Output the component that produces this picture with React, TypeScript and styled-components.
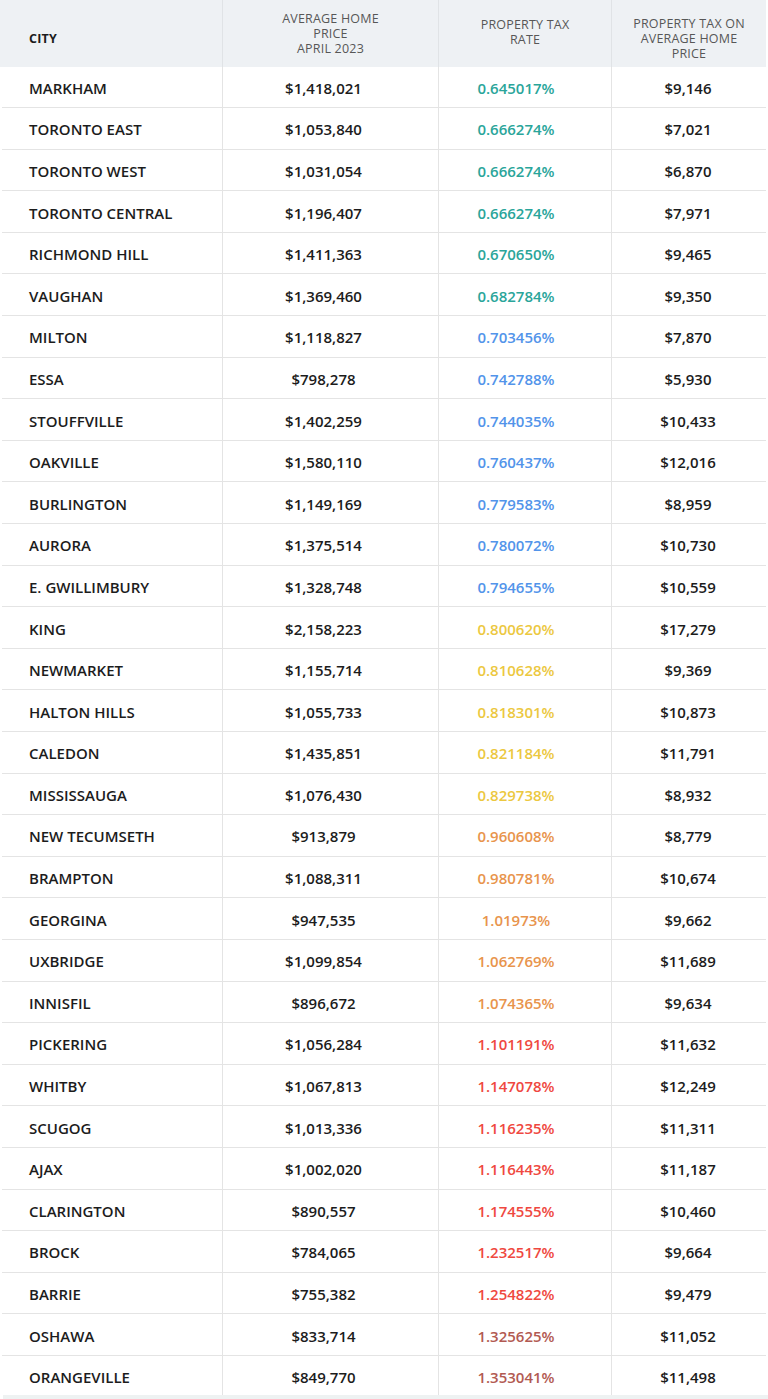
import React from "react";
import styled, { createGlobalStyle } from "styled-components";

const Global = createGlobalStyle`
  html, body { margin: 0; padding: 0; background: #ffffff; }
  body { font-family: "Open Sans", "Noto Sans", Arial, sans-serif; }
  * { box-sizing: border-box; }
`;

type Rate = "teal" | "blue" | "yellow" | "orange" | "red" | "brown";

const rateColors: Record<Rate, string> = {
  teal: "#2aa59a",
  blue: "#5294ea",
  yellow: "#ecc83f",
  orange: "#e8944c",
  red: "#ef4840",
  brown: "#b25a52",
};

const rows: [string, string, string, Rate, string][] = [
  ["MARKHAM", "$1,418,021", "0.645017%", "teal", "$9,146"],
  ["TORONTO EAST", "$1,053,840", "0.666274%", "teal", "$7,021"],
  ["TORONTO WEST", "$1,031,054", "0.666274%", "teal", "$6,870"],
  ["TORONTO CENTRAL", "$1,196,407", "0.666274%", "teal", "$7,971"],
  ["RICHMOND HILL", "$1,411,363", "0.670650%", "teal", "$9,465"],
  ["VAUGHAN", "$1,369,460", "0.682784%", "teal", "$9,350"],
  ["MILTON", "$1,118,827", "0.703456%", "blue", "$7,870"],
  ["ESSA", "$798,278", "0.742788%", "blue", "$5,930"],
  ["STOUFFVILLE", "$1,402,259", "0.744035%", "blue", "$10,433"],
  ["OAKVILLE", "$1,580,110", "0.760437%", "blue", "$12,016"],
  ["BURLINGTON", "$1,149,169", "0.779583%", "blue", "$8,959"],
  ["AURORA", "$1,375,514", "0.780072%", "blue", "$10,730"],
  ["E. GWILLIMBURY", "$1,328,748", "0.794655%", "blue", "$10,559"],
  ["KING", "$2,158,223", "0.800620%", "yellow", "$17,279"],
  ["NEWMARKET", "$1,155,714", "0.810628%", "yellow", "$9,369"],
  ["HALTON HILLS", "$1,055,733", "0.818301%", "yellow", "$10,873"],
  ["CALEDON", "$1,435,851", "0.821184%", "yellow", "$11,791"],
  ["MISSISSAUGA", "$1,076,430", "0.829738%", "yellow", "$8,932"],
  ["NEW TECUMSETH", "$913,879", "0.960608%", "orange", "$8,779"],
  ["BRAMPTON", "$1,088,311", "0.980781%", "orange", "$10,674"],
  ["GEORGINA", "$947,535", "1.01973%", "orange", "$9,662"],
  ["UXBRIDGE", "$1,099,854", "1.062769%", "orange", "$11,689"],
  ["INNISFIL", "$896,672", "1.074365%", "orange", "$9,634"],
  ["PICKERING", "$1,056,284", "1.101191%", "red", "$11,632"],
  ["WHITBY", "$1,067,813", "1.147078%", "red", "$12,249"],
  ["SCUGOG", "$1,013,336", "1.116235%", "red", "$11,311"],
  ["AJAX", "$1,002,020", "1.116443%", "red", "$11,187"],
  ["CLARINGTON", "$890,557", "1.174555%", "red", "$10,460"],
  ["BROCK", "$784,065", "1.232517%", "red", "$9,664"],
  ["BARRIE", "$755,382", "1.254822%", "red", "$9,479"],
  ["OSHAWA", "$833,714", "1.325625%", "brown", "$11,052"],
  ["ORANGEVILLE", "$849,770", "1.353041%", "brown", "$11,498"],
];

const Page = styled.div`
  width: 768px;
`;

const TableBox = styled.div`
  width: 766px;
  height: 1395px;
  overflow: hidden;
`;

const HeaderRow = styled.div`
  display: grid;
  grid-template-columns: 222px 216px 173px 155px;
  height: 66.5px;
  background: #eef1f4;
`;

const HeadCell = styled.div<{ $top: number; $align: "left" | "center"; $divider?: boolean }>`
  padding-top: ${(p) => p.$top}px;
  padding-left: ${(p) => (p.$align === "left" ? "29px" : "0")};
  text-align: ${(p) => p.$align};
  font-size: 12.5px;
  line-height: 15px;
  font-weight: 500;
  color: #575757;
  letter-spacing: 0.2px;
  border-left: ${(p) => (p.$divider ? "1px solid #e0e3e6" : "none")};
`;

const CityHead = styled(HeadCell)`
  color: #1c1c1c;
  font-weight: 700;
  font-size: 12.5px;
`;

const Body = styled.div`
  padding-left: 2px;
`;

const Row = styled.div`
  display: grid;
  grid-template-columns: 220px 216px 173px 155px;
  height: 41.6px;
  border-bottom: 1px solid #e4e4e4;
`;

const Cell = styled.div<{ $divider?: boolean; $shift?: number }>`
  display: flex;
  align-items: center;
  justify-content: center;
  padding-top: 2px;
  padding-right: ${(p) => p.$shift ?? 0}px;
  font-size: 15px;
  font-weight: 600;
  color: #1c1c1c;
  border-left: ${(p) => (p.$divider ? "1px solid #e4e4e4" : "none")};
`;

const CityCell = styled(Cell)`
  justify-content: flex-start;
  padding-left: 27px;
`;

const RateCell = styled(Cell)<{ $tone: Rate }>`
  color: ${(p) => rateColors[p.$tone]};
`;

const Strip = styled.div`
  margin-left: 3px;
  height: 4px;
  background: #eef2f2;
`;

export default function App() {
  return (
    <Page>
      <Global />
      <TableBox>
        <HeaderRow>
          <CityHead $top={31} $align="left">
            CITY
          </CityHead>
          <HeadCell $top={10.5} $align="center" $divider>
            AVERAGE HOME
            <br />
            PRICE
            <br />
            APRIL 2023
          </HeadCell>
          <HeadCell $top={16.5} $align="center" $divider>
            PROPERTY TAX
            <br />
            RATE
          </HeadCell>
          <HeadCell $top={16} $align="center" $divider>
            PROPERTY TAX ON
            <br />
            AVERAGE HOME
            <br />
            PRICE
          </HeadCell>
        </HeaderRow>
        <Body>
          {rows.map(([city, price, rate, tone, tax]) => (
            <Row key={city}>
              <CityCell>{city}</CityCell>
              <Cell $divider $shift={14}>
                {price}
              </Cell>
              <RateCell $divider $shift={18} $tone={tone}>
                {rate}
              </RateCell>
              <Cell $divider $shift={2}>
                {tax}
              </Cell>
            </Row>
          ))}
        </Body>
      </TableBox>
      <Strip />
    </Page>
  );
}
